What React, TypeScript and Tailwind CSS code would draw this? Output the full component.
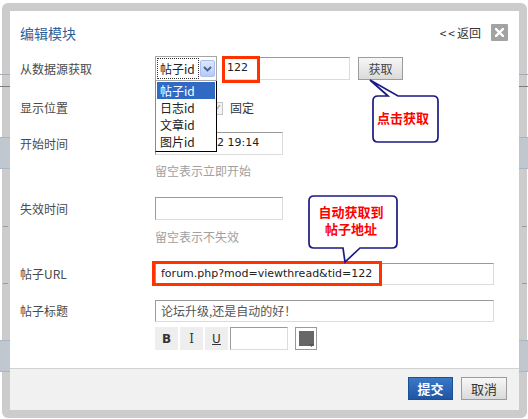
import React from "react";

const cjk = "font-['Noto_Sans_CJK_SC',sans-serif]";
const lat = "font-['DejaVu_Sans','Noto_Sans_CJK_SC',sans-serif]";

function Label({ children }: { children: React.ReactNode }) {
  return (
    <div className="w-[135px] shrink-0 text-[12px] leading-[16px] text-[#4a4a4a]">{children}</div>
  );
}

const inset =
  "border border-t-[#9a9a9a] border-l-[#9a9a9a] border-r-[#dcdcdc] border-b-[#dcdcdc] bg-white";

function SideStripes() {
  return (
    <>
      <div className="absolute left-0 top-[74px] h-px w-full bg-[#b0a4b6]" />
      <div className="absolute left-0 top-[86px] h-px w-full bg-[#7d7d7d]" />
      <div className="absolute left-0 top-[137px] h-[32px] w-full border-y border-y-[#a8b5c3] bg-[#c0c7ce]" />
      <div className="absolute left-[3px] top-[226px] h-px w-[5px] bg-[#9a9a9a]" />
      <div className="absolute left-[3px] top-[283px] h-px w-[5px] bg-[#9a9a9a]" />
      <div className="absolute left-0 top-[340px] h-[32px] w-full border-y border-y-[#a8b5c3] bg-[#c0c7ce]" />
    </>
  );
}

export default function App() {
  return (
    <div className={`relative h-[419px] w-[528px] overflow-hidden bg-white pl-[2px] pt-[3px] ${cjk}`}>
      <div className="flex h-[415px] w-[525px] flex-col rounded-[6px] border-[8px] border-[#cccccc] bg-white">
        {/* title */}
        <div className="flex h-[43px] shrink-0 items-center justify-between pl-[10px] pr-[11px]">
          <div className="text-[14px] leading-[18px] text-[#2f5f98]">编辑模块</div>
          <div className="flex items-center gap-[10px]">
            <span className="text-[12px] leading-[16px] text-[#333]">
              <span className="tracking-[2px]">&lt;&lt;</span>返回
            </span>
            <div className="flex h-[17px] w-[17px] items-center justify-center rounded-[1px] bg-[#a3a3a3]">
              <svg width="9" height="9" viewBox="0 0 9 9">
                <path d="M1 1 L8 8 M8 1 L1 8" stroke="#fff" strokeWidth="2.4" strokeLinecap="square" />
              </svg>
            </div>
          </div>
        </div>

        {/* form */}
        <div className="flex flex-col pl-[10px]">
          <div className="mt-[2px] flex h-[25px] items-center">
            <Label>从数据源获取</Label>
            <div className="flex items-center">
              <div className="flex h-[25px] w-[62px] items-center border border-[#a6a6a6] bg-white pl-[1px]">
                <div className="flex h-[21px] w-[42px] items-center border border-dotted border-[#333] pl-[2px] text-[12px] leading-[16px] text-[#222]">
                  帖子id
                </div>
                <div className="ml-[1px] flex h-[17px] w-[15px] items-center justify-center rounded-[2px] border border-[#a9bff0] bg-gradient-to-b from-[#dde7fc] to-[#b5cbf6]">
                  <svg width="9" height="6" viewBox="0 0 9 6">
                    <path d="M1 1 L4.5 4.5 L8 1" stroke="#4b5f86" strokeWidth="1.8" fill="none" />
                  </svg>
                </div>
              </div>
              <div className={`ml-[5px] flex h-[23px] w-[128px] items-center pl-[4px] ${inset} ${lat} text-[11px] text-[#222]`}>
                122
              </div>
              <div className="ml-[8px] flex h-[23px] w-[45px] items-center justify-center border border-[#9c9c9c] bg-gradient-to-b from-[#f7f7f7] to-[#dadada] text-[12px] leading-[16px] text-[#444]">
                获取
              </div>
            </div>
          </div>

          <div className="mt-[15px] flex h-[24px] items-center">
            <Label>显示位置</Label>
            <div className="ml-[55px] flex h-[13px] w-[13px] items-center justify-center border border-[#c4c4c4] bg-[#f4f4f4]">
              <svg width="9" height="8" viewBox="0 0 9 8">
                <path d="M1 4 L3.5 6.5 L8 1" stroke="#b5b5b5" strokeWidth="1.6" fill="none" />
              </svg>
            </div>
            <span className="ml-[7px] text-[12px] leading-[16px] text-[#333]">固定</span>
          </div>

          <div className="mt-[12px] flex h-[23px] items-center">
            <Label>开始时间</Label>
            <div className={`flex h-[23px] w-[128px] items-center pl-[4px] ${inset} ${lat} text-[11px] text-[#222]`}>
              2011-11-22 19:14
            </div>
          </div>
          <div className="mt-[8px] flex h-[16px] items-center pl-[135px] text-[12px] leading-[16px] text-[#a0a0a0]">
            留空表示立即开始
          </div>

          <div className="mt-[18px] flex h-[23px] items-center">
            <Label>失效时间</Label>
            <div className={`h-[23px] w-[128px] ${inset}`} />
          </div>
          <div className="mt-[9px] flex h-[16px] items-center pl-[135px] text-[12px] leading-[16px] text-[#a0a0a0]">
            留空表示不失效
          </div>

          <div className="mt-[18px] flex h-[22px] items-center">
            <Label>帖子URL</Label>
            <div className={`flex h-[22px] w-[339px] items-center pl-[5px] ${inset} ${lat} text-[11px] text-[#222]`}>
              forum.php?mod=viewthread&amp;tid=122
            </div>
          </div>

          <div className="mt-[15px] flex h-[22px] items-center">
            <Label>帖子标题</Label>
            <div className={`flex h-[22px] w-[339px] items-center pl-[5px] ${inset} text-[12px] leading-[16px] text-[#555]`}>
              论坛升级,还是自动的好！
            </div>
          </div>

          <div className="mt-[5px] flex h-[23px] items-center pl-[135px]">
            <div className="flex h-[23px] w-[23px] items-center justify-center bg-[#eeeeee] font-['DejaVu_Sans',sans-serif] text-[12px] font-bold text-[#333]">
              B
            </div>
            <div className="ml-[2px] flex h-[23px] w-[23px] items-center justify-center bg-[#eeeeee] font-['DejaVu_Serif',serif] text-[12px] text-[#333]">
              I
            </div>
            <div className="ml-[2px] flex h-[23px] w-[23px] items-center justify-center bg-[#eeeeee] font-['DejaVu_Sans',sans-serif] text-[12px] text-[#333] underline">
              U
            </div>
            <div className={`ml-[2px] h-[23px] w-[58px] ${inset}`} />
            <div className="relative ml-[7px] flex h-[23px] w-[22px] items-center justify-center border border-[#9a9a9a] bg-white">
              <div className="h-[15px] w-[15px] bg-[#666666]" />
              <svg className="absolute bottom-[2px] right-[2px]" width="5" height="3" viewBox="0 0 5 3">
                <path d="M0 0 L5 0 L2.5 3 Z" fill="#555" />
              </svg>
            </div>
          </div>
        </div>

        {/* footer */}
        <div className="mt-[18px] flex flex-1 justify-end gap-[8px] border-t border-t-[#d2d2d2] bg-[#f1f1f1] pr-[12px] pt-[8px]">
          <div className="flex h-[23px] w-[45px] items-center justify-center border border-[#1d4f93] bg-gradient-to-b from-[#3a78c8] to-[#1f55a3] text-[13px] font-bold leading-[16px] text-white">
            提交
          </div>
          <div className="flex h-[23px] w-[46px] items-center justify-center border border-[#9c9c9c] bg-gradient-to-b from-[#f7f7f7] to-[#dadada] text-[13px] leading-[16px] text-[#333]">
            取消
          </div>
        </div>
      </div>

      {/* frame side stripes */}
      <div className="absolute left-0 top-0 h-full w-[10px]">
        <SideStripes />
      </div>
      <div className="absolute left-[519px] top-0 h-full w-[9px]">
        <SideStripes />
      </div>

      {/* dropdown list */}
      <div className="absolute left-[155px] top-[81px] w-[62px] border-b border-l border-r border-b-black border-l-[#8a8a8a] border-r-black bg-white pb-[1px] pt-[1px]">
        <div className="mx-[1px] h-[17px] bg-[#316ac5] pl-[3px] text-[12px] leading-[17px] text-white">帖子id</div>
        <div className="mx-[1px] h-[17px] pl-[3px] text-[12px] leading-[17px] text-[#222]">日志id</div>
        <div className="mx-[1px] h-[17px] pl-[3px] text-[12px] leading-[17px] text-[#222]">文章id</div>
        <div className="mx-[1px] h-[17px] pl-[3px] text-[12px] leading-[17px] text-[#222]">图片id</div>
      </div>

      {/* red highlight boxes */}
      <div className="absolute left-[222px] top-[56px] h-[27px] w-[38px] border-[3px] border-[#ff3300]" />
      <div className="absolute left-[152px] top-[261px] h-[25px] w-[230px] border-[3px] border-[#ff3300]" />

      {/* callout 1 */}
      <svg className="absolute left-[360px] top-[74px]" width="85" height="72" viewBox="0 0 85 72">
        <path
          d="M18 22 L28 22 L10 6 L38 22 L73 22 Q78 22 78 27 L78 63 Q78 68 73 68 L18 68 Q13 68 13 63 L13 27 Q13 22 18 22 Z"
          fill="#fff"
          stroke="#1a1a82"
          strokeWidth="1.7"
        />
      </svg>
      <div className="absolute left-[374px] top-[110px] w-[58px] text-center text-[13px] font-bold leading-[16px] text-[#ff0000]">
        点击获取
      </div>

      {/* callout 2 */}
      <svg className="absolute left-[300px] top-[190px]" width="105" height="76" viewBox="0 0 105 76">
        <path
          d="M14 6 L92 6 Q97 6 97 11 L97 53 Q97 58 92 58 L60 58 L45 72 L43 58 L14 58 Q9 58 9 53 L9 11 Q9 6 14 6 Z"
          fill="#fff"
          stroke="#1a1a82"
          strokeWidth="1.7"
        />
      </svg>
      <div className="absolute left-[301px] top-[203px] flex w-[100px] flex-col items-center text-[13px] font-bold leading-[17px] text-[#ff0000]">
        <span>自动获取到</span>
        <span>帖子地址</span>
      </div>
    </div>
  );
}
